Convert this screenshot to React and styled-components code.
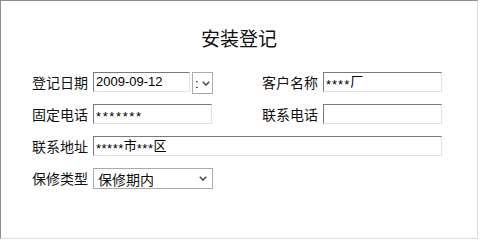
import React from "react";
import styled, { createGlobalStyle } from "styled-components";

const Global = createGlobalStyle`
  html, body { margin: 0; padding: 0; background: #ffffff; }
  body { font-family: "Noto Sans CJK SC", "Liberation Sans", sans-serif; }
`;

const Frame = styled.div`
  box-sizing: border-box;
  width: 478px;
  height: 239px;
  background: #ffffff;
  border-left: 1px solid #8c8c8c;
  border-top: 1px solid #8c8c8c;
  border-right: 1px solid #dedede;
  border-bottom: 1px solid #dedede;
`;

const Title = styled.div`
  margin-top: 26px;
  height: 22px;
  line-height: 22px;
  text-align: center;
  font-size: 19px;
  color: #111;
  font-family: "Noto Sans CJK SC", sans-serif;
`;

const Form = styled.div`
  margin-top: 23px;
  padding-left: 31px;
  display: grid;
  grid-template-columns: 56px 120px 39px 56px 120px;
  grid-template-rows: repeat(4, 20px);
  column-gap: 5px;
  row-gap: 12px;
  align-items: start;
`;

const Label = styled.div`
  grid-column: ${(p) => p.$col};
  font-size: 14px;
  line-height: 20px;
  height: 20px;
  color: #111;
  white-space: nowrap;
  font-family: "Noto Sans CJK SC", sans-serif;
`;

const Field = styled.div`
  grid-column: ${(p) => p.$col || "auto"};
  box-sizing: border-box;
  width: ${(p) => p.$w}px;
  height: 20px;
  padding: 0 2px;
  border-style: solid;
  border-width: 1px;
  border-color: #7a7a7a #e2e2e2 #e2e2e2 #7a7a7a;
  background: #ffffff;
  color: #000;
  font-size: 13px;
  line-height: 18px;
  white-space: nowrap;
  overflow: hidden;
  font-family: "Liberation Sans", "Noto Sans CJK SC", sans-serif;
`;

const Mask = styled.span`
  letter-spacing: ${(p) => p.$sp ?? 1}px;
  vertical-align: -3px;
  font-size: 13px;
`;

const DateCell = styled.div`
  display: flex;
  align-items: flex-start;
  gap: 2px;
`;

const Spin = styled.div`
  box-sizing: border-box;
  width: 21px;
  height: 22px;
  border: 1px solid #ababab;
  background: #fff;
  display: flex;
  align-items: center;
  padding-left: 2px;
  gap: 3px;
  font-size: 13px;
  font-family: "Liberation Sans", sans-serif;
  color: #000;
`;

const Select = styled.div`
  grid-column: 2;
  box-sizing: border-box;
  width: 120px;
  height: 21px;
  border: 1px solid #a9a9a9;
  background: #fff;
  display: flex;
  align-items: center;
  justify-content: space-between;
  padding: 0 5px 0 4px;
  font-size: 14px;
  color: #111;
  font-family: "Noto Sans CJK SC", sans-serif;
`;

const Chevron = () => (
  <svg width="8" height="5" viewBox="0 0 8 5">
    <polyline points="0.8,0.8 4,4 7.2,0.8" fill="none" stroke="#4d4d4d" strokeWidth="1.6" />
  </svg>
);

export default function App() {
  return (
    <>
      <Global />
      <Frame>
        <Title>安装登记</Title>
        <Form>
          <Label $col={1}>登记日期</Label>
          <DateCell>
            <Field $w={97}>2009-09-12</Field>
            <Spin>
              <span>:</span>
              <Chevron />
            </Spin>
          </DateCell>
          <Label $col={4}>客户名称</Label>
          <Field $col={5} $w={119}>
            <Mask $sp={1}>****</Mask>厂
          </Field>

          <Label $col={1}>固定电话</Label>
          <Field $col={2} $w={119}>
            <Mask $sp={1.6}>*******</Mask>
          </Field>
          <Label $col={4}>联系电话</Label>
          <Field $col={5} $w={119} />

          <Label $col={1}>联系地址</Label>
          <Field $col="2 / 6" $w={349}>
            <Mask $sp={0.5}>*****</Mask>市<Mask $sp={0.5}>***</Mask>区
          </Field>

          <Label $col={1}>保修类型</Label>
          <Select>
            <span>保修期内</span>
            <Chevron />
          </Select>
        </Form>
      </Frame>
    </>
  );
}
